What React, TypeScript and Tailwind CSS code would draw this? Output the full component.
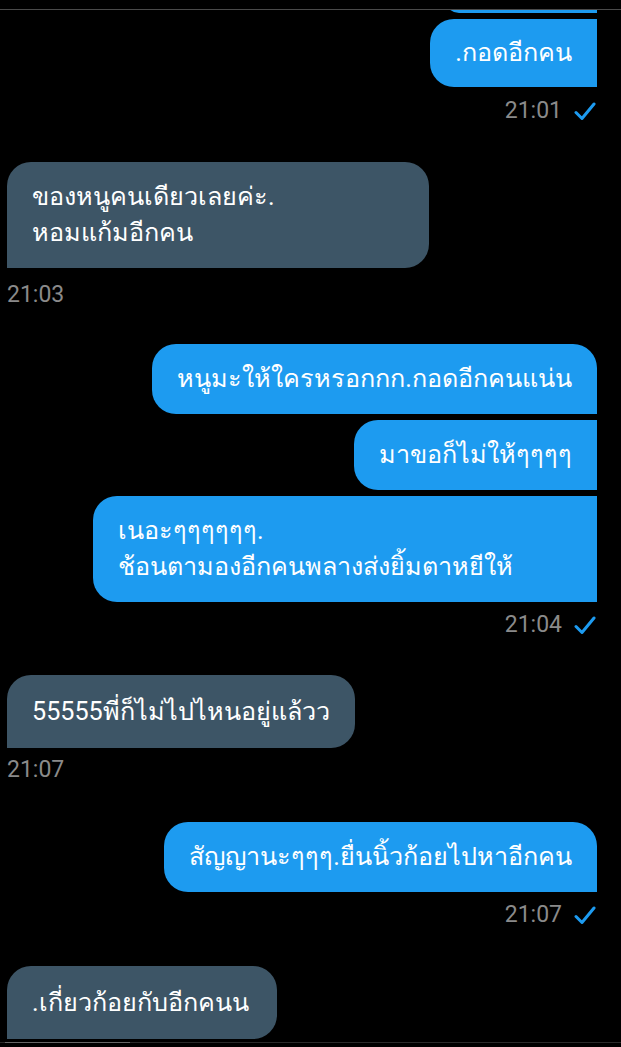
import React from "react";

type Bubble = {
  lines: string[];
  corners: string;
  size?: string;
};

type Group = {
  side: "in" | "out";
  gap: string;
  timeGap: string;
  bubbles: Bubble[];
  time?: string;
};

const groups: Group[] = [
  {
    side: "out",
    gap: "",
    timeGap: "mt-[10px]",
    bubbles: [{ lines: [".กอดอีกคน"], corners: "rounded-l-[24px]", size: "py-[16px]" }],
    time: "21:01",
  },
  {
    side: "in",
    gap: "mt-[37px]",
    timeGap: "mt-[13px]",
    bubbles: [
      {
        lines: ["ของหนูคนเดียวเลยค่ะ.", "หอมแก้มอีกคน"],
        corners: "rounded-r-[24px] rounded-tl-[24px]",
        size: "w-[422px] py-[17px]",
      },
    ],
    time: "21:03",
  },
  {
    side: "out",
    gap: "mt-[35px]",
    timeGap: "mt-[9px]",
    bubbles: [
      { lines: ["หนูมะให้ใครหรอกกก.กอดอีกคนแน่น"], corners: "rounded-l-[24px] rounded-tr-[24px]" },
      { lines: ["มาขอก็ไม่ให้ๆๆๆๆ"], corners: "rounded-l-[24px]" },
      {
        lines: ["เนอะๆๆๆๆๆๆ.", "ช้อนตามองอีกคนพลางส่งยิ้มตาหยีให้"],
        corners: "rounded-l-[24px]",
        size: "w-[504px] py-[17px]",
      },
    ],
    time: "21:04",
  },
  {
    side: "in",
    gap: "mt-[36px]",
    timeGap: "mt-[8px]",
    bubbles: [
      {
        lines: ["55555พี่ก็ไม่ไปไหนอยู่แล้วว"],
        corners: "rounded-r-[24px] rounded-tl-[24px]",
        size: "py-[18px] leading-[37px]",
      },
    ],
    time: "21:07",
  },
  {
    side: "out",
    gap: "mt-[38px]",
    timeGap: "mt-[9px]",
    bubbles: [
      { lines: ["สัญญานะๆๆๆ.ยื่นนิ้วก้อยไปหาอีกคน"], corners: "rounded-l-[24px] rounded-tr-[24px]" },
    ],
    time: "21:07",
  },
  {
    side: "in",
    gap: "mt-[37px]",
    timeGap: "",
    bubbles: [
      {
        lines: [".เกี่ยวก้อยกับอีกคนน"],
        corners: "rounded-r-[24px] rounded-tl-[24px]",
        size: "py-[18px] leading-[37px] pr-[28px]",
      },
    ],
  },
];

function Check() {
  return (
    <svg width="22" height="20" viewBox="0 0 22 20" fill="none">
      <path d="M2 11.5 L8 17.5 L20 3" stroke="#1d9bf0" strokeWidth="3" strokeLinecap="round" strokeLinejoin="round" />
    </svg>
  );
}

export default function App() {
  return (
    <div
      className="w-[621px] h-[1047px] overflow-hidden bg-black text-white flex flex-col"
      style={{ fontFamily: "Roboto, 'Noto Sans', sans-serif" }}
    >
      {/* status bar edge + tail of previous bubble */}
      <div className="h-[9px] shrink-0" />
      <div className="h-px shrink-0 bg-[#4a4a4a]" />
      <div className="h-[3px] shrink-0 overflow-hidden flex justify-end items-end pr-[24px]">
        <div className="w-[152px] h-[30px] shrink-0 bg-[#1d9bf0] rounded-bl-[14px]" />
      </div>

      <div className="flex flex-col pt-[6px]">
        {groups.map((g, gi) => (
          <div key={gi} className={`flex flex-col ${g.gap}`}>
            <div className={`flex flex-col gap-[6px] ${g.side === "out" ? "items-end pr-[24px]" : "items-start pl-[7px]"}`}>
              {g.bubbles.map((b, bi) => (
                <div
                  key={bi}
                  className={`${g.side === "out" ? "bg-[#1d9bf0]" : "bg-[#3d5566]"} ${b.corners} px-[25px] text-[25.2px] leading-[36px] whitespace-nowrap ${b.size ?? "py-[17px]"}`}
                >
                  {b.lines.map((l, li) => (
                    <div key={li}>{l}</div>
                  ))}
                </div>
              ))}
            </div>
            {g.time && (
              <div
                className={`${g.timeGap} h-[28px] flex items-center gap-[12px] text-[23px] text-[#8a8a8a] ${
                  g.side === "out" ? "justify-end pr-[25px]" : "pl-[7px]"
                }`}
              >
                <span>{g.time}</span>
                {g.side === "out" && <Check />}
              </div>
            )}
          </div>
        ))}
      </div>

      <div className="mt-auto mb-[4px] relative h-px bg-[#2a2a2a]">
        <div className="absolute left-[5px] top-0 h-px w-[125px] bg-[#666]" />
      </div>
    </div>
  );
}
